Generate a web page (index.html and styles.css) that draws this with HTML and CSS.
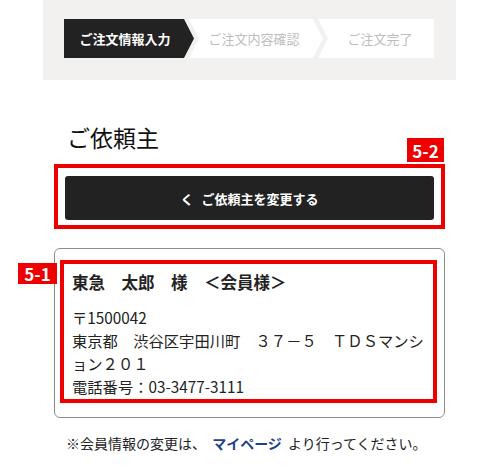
FILE: index.html
```html
<!DOCTYPE html>
<html lang="ja">
<head>
    <meta charset="UTF-8">
    <title>ご依頼主</title>
    <link rel="stylesheet" href="styles.css">
</head>
<body>

    <div class="progress">
        <div class="steps">
            <div class="step step-current">ご注文情報入力</div>
            <div class="step step-middle">ご注文内容確認</div>
            <div class="step step-last">ご注文完了</div>
        </div>
    </div>

    <h2 class="section-title">ご依頼主</h2>

    <!-- 5-2 : change button -->
    <div class="mark mark-button">
        <span class="mark-label label-52">5-2</span>
        <button class="change-button"><span class="chevron">く</span>ご依頼主を変更する</button>
    </div>

    <!-- 5-1 : requester info -->
    <div class="requester-card">
        <span class="mark-label label-51">5-1</span>
        <div class="mark mark-info">
            <p class="requester-name">東急　太郎　様　＜会員様＞</p>
            <p class="requester-line">〒1500042</p>
            <p class="requester-line">東京都　渋谷区宇田川町　３７－５　ＴＤＳマンション２０１</p>
            <p class="requester-line">電話番号：03-3477-3111</p>
        </div>
    </div>

    <p class="note">※会員情報の変更は、 <a class="note-link" href="#">マイページ</a> より行ってください。</p>

</body>
</html>
```

FILE: styles.css
```css
/* Basic reset */
* {
    margin: 0;
    padding: 0;
    box-sizing: border-box;
}

body {
    width: 500px;
    font-family: "Noto Sans CJK JP", "Noto Sans", sans-serif;
    color: #222;
    background-color: #fff;
}

/* Progress steps */
.progress {
    margin-left: 43px;
    width: 413px;
    height: 80px;
    padding: 19px 0 0 21px;
    background-color: #f2f1ef;
}

.steps {
    display: flex;
    height: 39px;
}

.step {
    display: flex;
    justify-content: center;
    align-items: center;
    font-size: 13px;
    color: #bdbdbd;
    background-color: #fff;
}

.step-current {
    width: 130px;
    padding-right: 8px;
    font-weight: bold;
    color: #fff;
    background-color: #222;
    clip-path: polygon(0 0, calc(100% - 10px) 0, 100% 50%, calc(100% - 10px) 100%, 0 100%);
}

.step-middle {
    width: 134px;
    margin-left: -5px;
    padding-right: 4px;
    clip-path: polygon(0 0, calc(100% - 10px) 0, 100% 50%, calc(100% - 10px) 100%, 0 100%, 10px 50%);
}

.step-last {
    width: 116px;
    margin-left: -5px;
    padding-left: 8px;
    clip-path: polygon(0 0, 100% 0, 100% 100%, 0 100%, 10px 50%);
}

/* Section heading */
.section-title {
    margin: 41px 0 0 67px;
    font-size: 23px;
    font-weight: normal;
    line-height: 32px;
    color: #111;
}

/* Red annotation boxes */
.mark {
    position: relative;
    border: 4px solid #ee0000;
}

.mark-label {
    position: absolute;
    display: flex;
    justify-content: center;
    align-items: center;
    font-size: 17px;
    font-weight: bold;
    color: #fff;
    background-color: #ee0000;
}

.mark-button {
    width: 391px;
    margin: 11px 0 0 54px;
    padding: 8px 7px 5px;
}

.label-52 {
    top: -30px;
    right: -3px;
    width: 37px;
    height: 24px;
}

/* Change button */
.change-button {
    display: flex;
    justify-content: center;
    align-items: center;
    width: 100%;
    height: 44px;
    font-family: "Noto Sans CJK JP", sans-serif;
    font-size: 13px;
    font-weight: bold;
    color: #fff;
    background-color: #222;
    border: none;
    border-radius: 3px;
}

.chevron {
    margin-right: 8px;
}

/* Requester card */
.requester-card {
    position: relative;
    width: 391px;
    margin: 19px 0 0 54px;
    padding: 11px 7px 14px 5px;
    border: 1px solid #8c8c8c;
    border-radius: 6px;
}

.label-51 {
    top: 14px;
    left: -37px;
    width: 39px;
    height: 21px;
}

.mark-info {
    padding: 7px 6px 1px 8px;
}

.requester-name {
    margin-bottom: 12px;
    font-size: 16.5px;
    font-weight: bold;
    line-height: 23px;
}

.requester-line {
    font-size: 15.3px;
    line-height: 23px;
    line-break: anywhere;
    text-spacing-trim: space-all;
}

/* Note */
.note {
    margin: 15px 0 0 66px;
    font-size: 14px;
    line-height: 20px;
}

.note-link {
    margin: 0 3px;
    font-weight: bold;
    color: #1f3f8f;
    text-decoration: underline;
    text-decoration-color: #3b6cc4;
    text-decoration-thickness: 2px;
    text-underline-offset: 4px;
}
```
